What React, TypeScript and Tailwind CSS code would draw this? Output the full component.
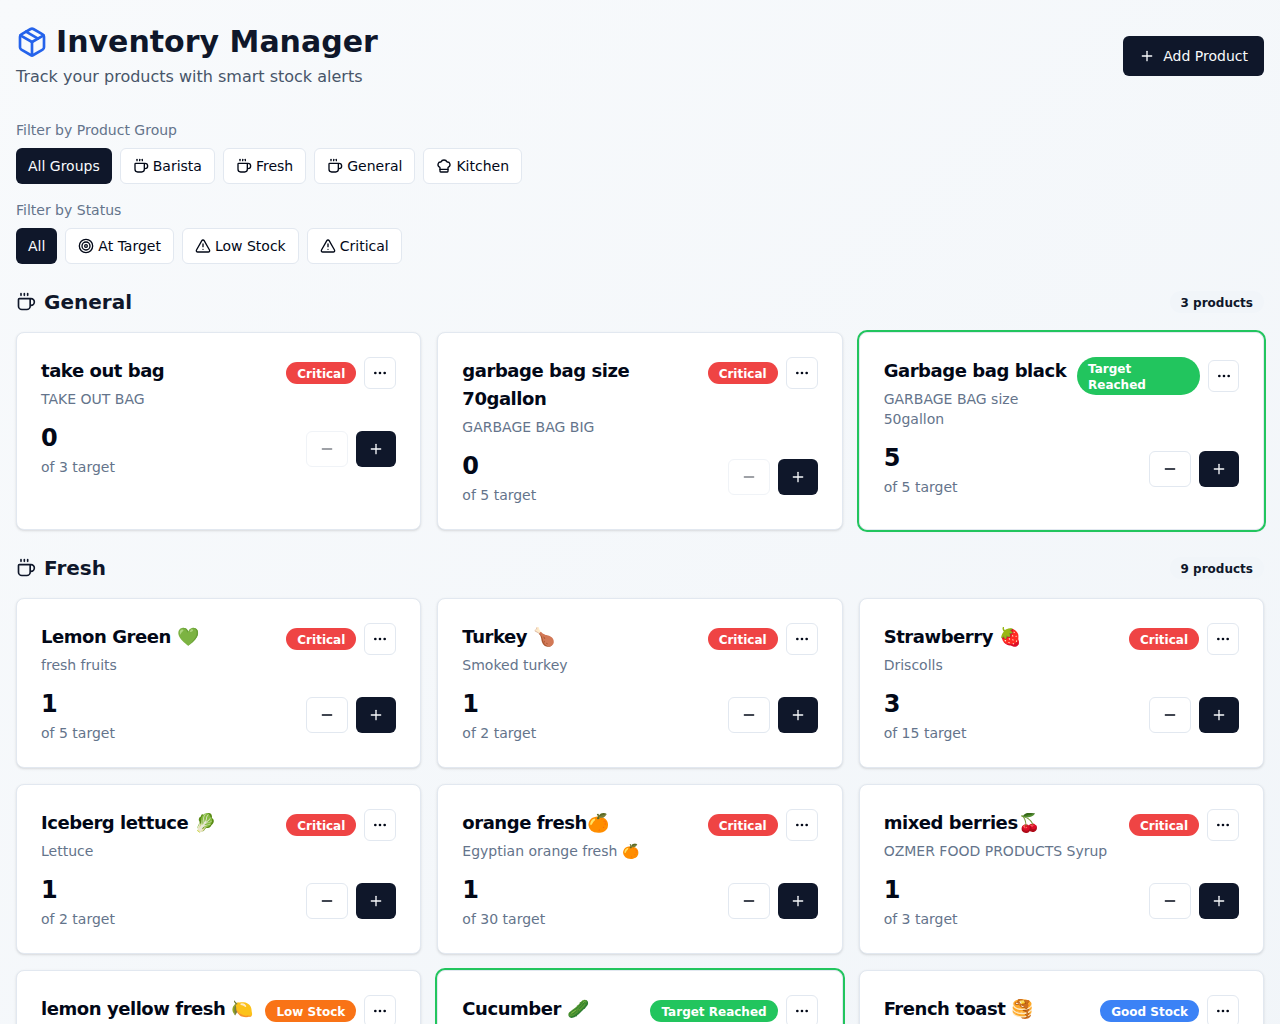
import {
  ChefHat,
  Coffee,
  Minus,
  MoreHorizontal,
  Package,
  Plus,
  Target,
  TriangleAlert,
} from "lucide-react";

type Status = "Critical" | "Low Stock" | "Good Stock" | "Target Reached";

type Product = {
  name: string;
  note: string;
  count: number;
  target: number;
  status: Status;
};

const badgeColors: Record<Status, string> = {
  Critical: "bg-[#ef4444]",
  "Low Stock": "bg-[#f97316]",
  "Good Stock": "bg-[#3b82f6]",
  "Target Reached": "bg-[#22c55e]",
};

const generalProducts: Product[] = [
  { name: "take out bag", note: "TAKE OUT BAG", count: 0, target: 3, status: "Critical" },
  { name: "garbage bag size 70gallon", note: "GARBAGE BAG BIG", count: 0, target: 5, status: "Critical" },
  { name: "Garbage bag black", note: "GARBAGE BAG size 50gallon", count: 5, target: 5, status: "Target Reached" },
];

const freshProducts: Product[] = [
  { name: "Lemon Green 💚", note: "fresh fruits", count: 1, target: 5, status: "Critical" },
  { name: "Turkey 🍗", note: "Smoked turkey", count: 1, target: 2, status: "Critical" },
  { name: "Strawberry 🍓", note: "Driscolls", count: 3, target: 15, status: "Critical" },
  { name: "Iceberg lettuce 🥬", note: "Lettuce", count: 1, target: 2, status: "Critical" },
  { name: "orange fresh🍊", note: "Egyptian orange fresh 🍊", count: 1, target: 30, status: "Critical" },
  { name: "mixed berries🍒", note: "OZMER FOOD PRODUCTS Syrup", count: 1, target: 3, status: "Critical" },
  { name: "lemon yellow fresh 🍋", note: "fresh fruits", count: 2, target: 5, status: "Low Stock" },
  { name: "Cucumber 🥒", note: "fresh", count: 5, target: 5, status: "Target Reached" },
  { name: "French toast 🥞", note: "fresh", count: 4, target: 5, status: "Good Stock" },
];

const groupFilters = [
  { label: "Barista", icon: Coffee },
  { label: "Fresh", icon: Coffee },
  { label: "General", icon: Coffee },
  { label: "Kitchen", icon: ChefHat },
];

const statusFilters = [
  { label: "At Target", icon: Target },
  { label: "Low Stock", icon: TriangleAlert },
  { label: "Critical", icon: TriangleAlert },
];

const ProductCard = ({ product }: { product: Product }) => {
  const reached = product.status === "Target Reached";

  return (
    <div
      className={`rounded-lg border border-[#e2e8f0] bg-white p-6 shadow-sm ${
        reached ? "ring-2 ring-[#22c55e]" : ""
      }`}
    >
      <div className="mb-3 flex items-start justify-between">
        <div>
          <h3 className="text-lg font-bold tracking-tight text-[#020817]">{product.name}</h3>
          <p className="mt-1 text-sm text-[#64748b]">{product.note}</p>
        </div>
        <div className="flex items-center gap-2">
          <span
            className={`rounded-full border border-transparent px-2.5 pt-[3px] pb-px text-xs font-bold text-white ${badgeColors[product.status]}`}
          >
            {product.status}
          </span>
          <button className="flex h-8 w-8 items-center justify-center rounded-md border border-[#e2e8f0] bg-white text-[#020817]">
            <MoreHorizontal size={16} />
          </button>
        </div>
      </div>

      <div className="flex items-center justify-between">
        <div>
          <div className="h-8 text-2xl leading-[34px] font-bold text-[#020817]">{product.count}</div>
          <div className="mt-1 text-sm text-[#64748b]">of {product.target} target</div>
        </div>
        <div className="flex items-center gap-2">
          <button
            className={`flex h-9 items-center justify-center rounded-md border border-[#e2e8f0] bg-white px-3 text-[#020817] ${
              product.count === 0 ? "opacity-50" : ""
            }`}
          >
            <Minus size={16} />
          </button>
          <button className="flex h-9 items-center justify-center rounded-md bg-[#0f172a] px-3 text-[#f8fafc]">
            <Plus size={16} />
          </button>
        </div>
      </div>
    </div>
  );
};

const ProductSection = ({ title, products }: { title: string; products: Product[] }) => (
  <section className="mb-6">
    <div className="mb-4 flex items-center justify-between">
      <h2 className="flex items-center gap-2 text-xl font-bold text-[#0f172a]">
        <Coffee size={20} />
        {title}
      </h2>
      <span className="rounded-full border border-transparent bg-[#f1f5f9] px-2.5 pt-[3px] pb-px text-xs font-bold text-[#0f172a]">
        {products.length} products
      </span>
    </div>
    <div className="grid grid-cols-3 gap-4">
      {products.map((product) => (
        <ProductCard key={product.name} product={product} />
      ))}
    </div>
  </section>
);

export default function App() {
  return (
    <div className="min-h-screen bg-gradient-to-br from-[#f8fafc] to-[#f1f5f9] px-4 py-6 font-['DejaVu_Sans',sans-serif]">
      <header className="mb-8 flex items-center justify-between">
        <div>
          <h1 className="flex items-center gap-2 text-3xl font-bold text-[#0f172a]">
            <Package size={32} className="text-[#2563eb]" />
            Inventory Manager
          </h1>
          <p className="mt-1 h-6 leading-[26px] text-[#475569]">Track your products with smart stock alerts</p>
        </div>
        <button className="flex h-10 items-center gap-2 rounded-md bg-[#0f172a] px-4 text-sm text-[#f8fafc]">
          <Plus size={16} />
          Add Product
        </button>
      </header>

      <div className="mb-4">
        <p className="mb-2 text-sm text-[#64748b]">Filter by Product Group</p>
        <div className="flex gap-2">
          <button className="h-9 rounded-md bg-[#0f172a] px-3 text-sm text-[#f8fafc]">All Groups</button>
          {groupFilters.map(({ label, icon: Icon }) => (
            <button
              key={label}
              className="flex h-9 items-center gap-1 rounded-md border border-[#e2e8f0] bg-white px-3 text-sm text-[#020817]"
            >
              <Icon size={16} />
              {label}
            </button>
          ))}
        </div>
      </div>

      <div className="mb-6">
        <p className="mb-2 text-sm text-[#64748b]">Filter by Status</p>
        <div className="flex gap-2">
          <button className="h-9 rounded-md bg-[#0f172a] px-3 text-sm text-[#f8fafc]">All</button>
          {statusFilters.map(({ label, icon: Icon }) => (
            <button
              key={label}
              className="flex h-9 items-center gap-1 rounded-md border border-[#e2e8f0] bg-white px-3 text-sm text-[#020817]"
            >
              <Icon size={16} />
              {label}
            </button>
          ))}
        </div>
      </div>

      <ProductSection title="General" products={generalProducts} />
      <ProductSection title="Fresh" products={freshProducts} />
    </div>
  );
}
